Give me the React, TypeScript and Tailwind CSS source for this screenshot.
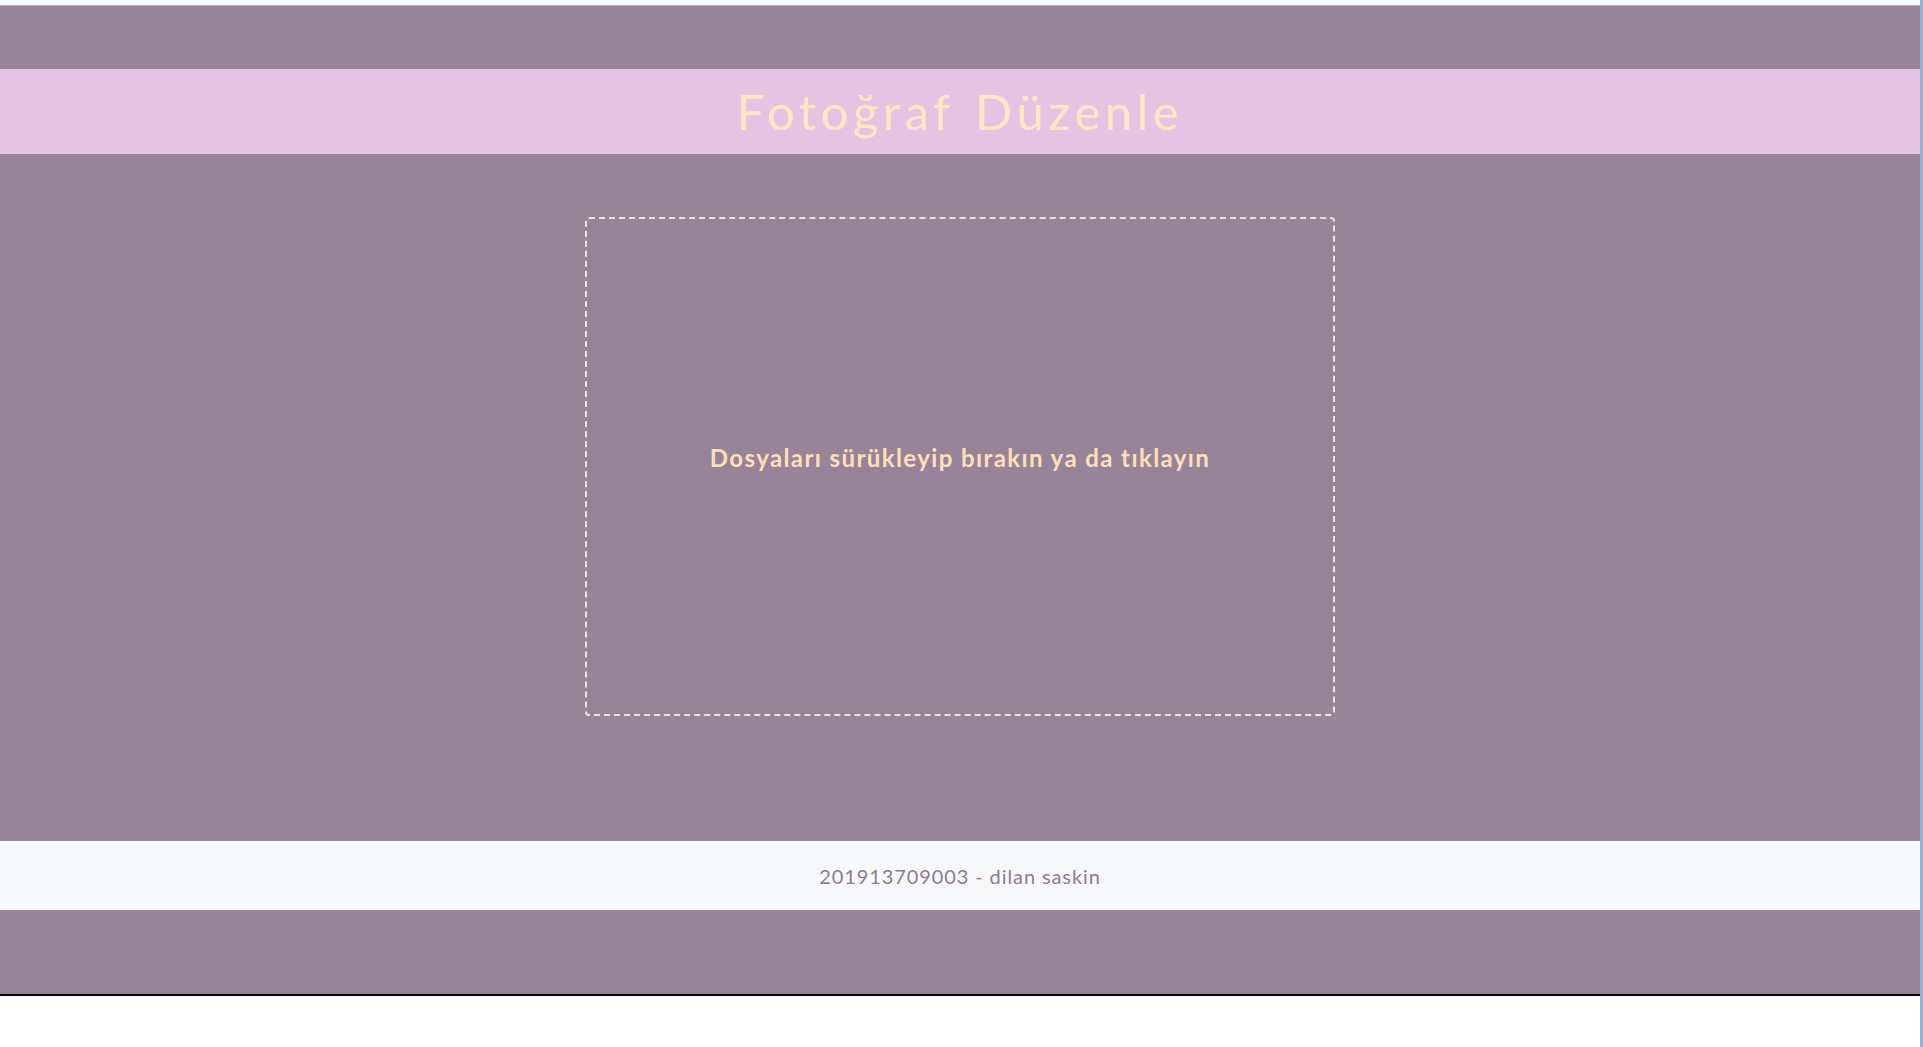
import React from 'react';

const App: React.FC = () => {
  return (
    <div className="flex h-screen w-full overflow-hidden bg-white" style={{ fontFamily: 'Lato, "Open Sans", sans-serif' }}>
      <div className="flex flex-1 flex-col">
        {/* Top strip */}
        <div className="h-[5px] border-b border-[#b9b0bb] bg-[#f5f8fc] box-content" />

        {/* Page */}
        <div className="flex flex-col bg-[#978499] pt-[63px] border-b-2 border-black">
          {/* Header */}
          <header className="flex h-[85px] items-center justify-center bg-[#e6c3e3]">
            <h1 className="text-[49px] tracking-[4.5px] text-[#fde6c6]" style={{ wordSpacing: '4px' }}>
              Fotoğraf Düzenle
            </h1>
          </header>

          {/* Drop zone */}
          <div className="flex justify-center pt-[63px] pb-[124px]">
            <div className="flex h-[499px] w-[750px] cursor-pointer items-center justify-center rounded-[4px] border-2 border-dashed border-[#e8e4e9]">
              <p className="-mt-[18px] text-[24px] font-bold tracking-[1.4px] text-[#ffdfb9]">
                Dosyaları sürükleyip bırakın ya da tıklayın
              </p>
            </div>
          </div>

          {/* Footer */}
          <footer className="flex h-[70px] items-center justify-center border-t border-[#978499] bg-[#f7f8fa]">
            <span className="text-[20px] tracking-[0.9px] text-[#8f7b92]">201913709003 - dilan saskin</span>
          </footer>

          <div className="h-[84px]" />
        </div>
      </div>
      <div className="w-[3px] bg-[#93b3d3]" />
    </div>
  );
};

export default App;
